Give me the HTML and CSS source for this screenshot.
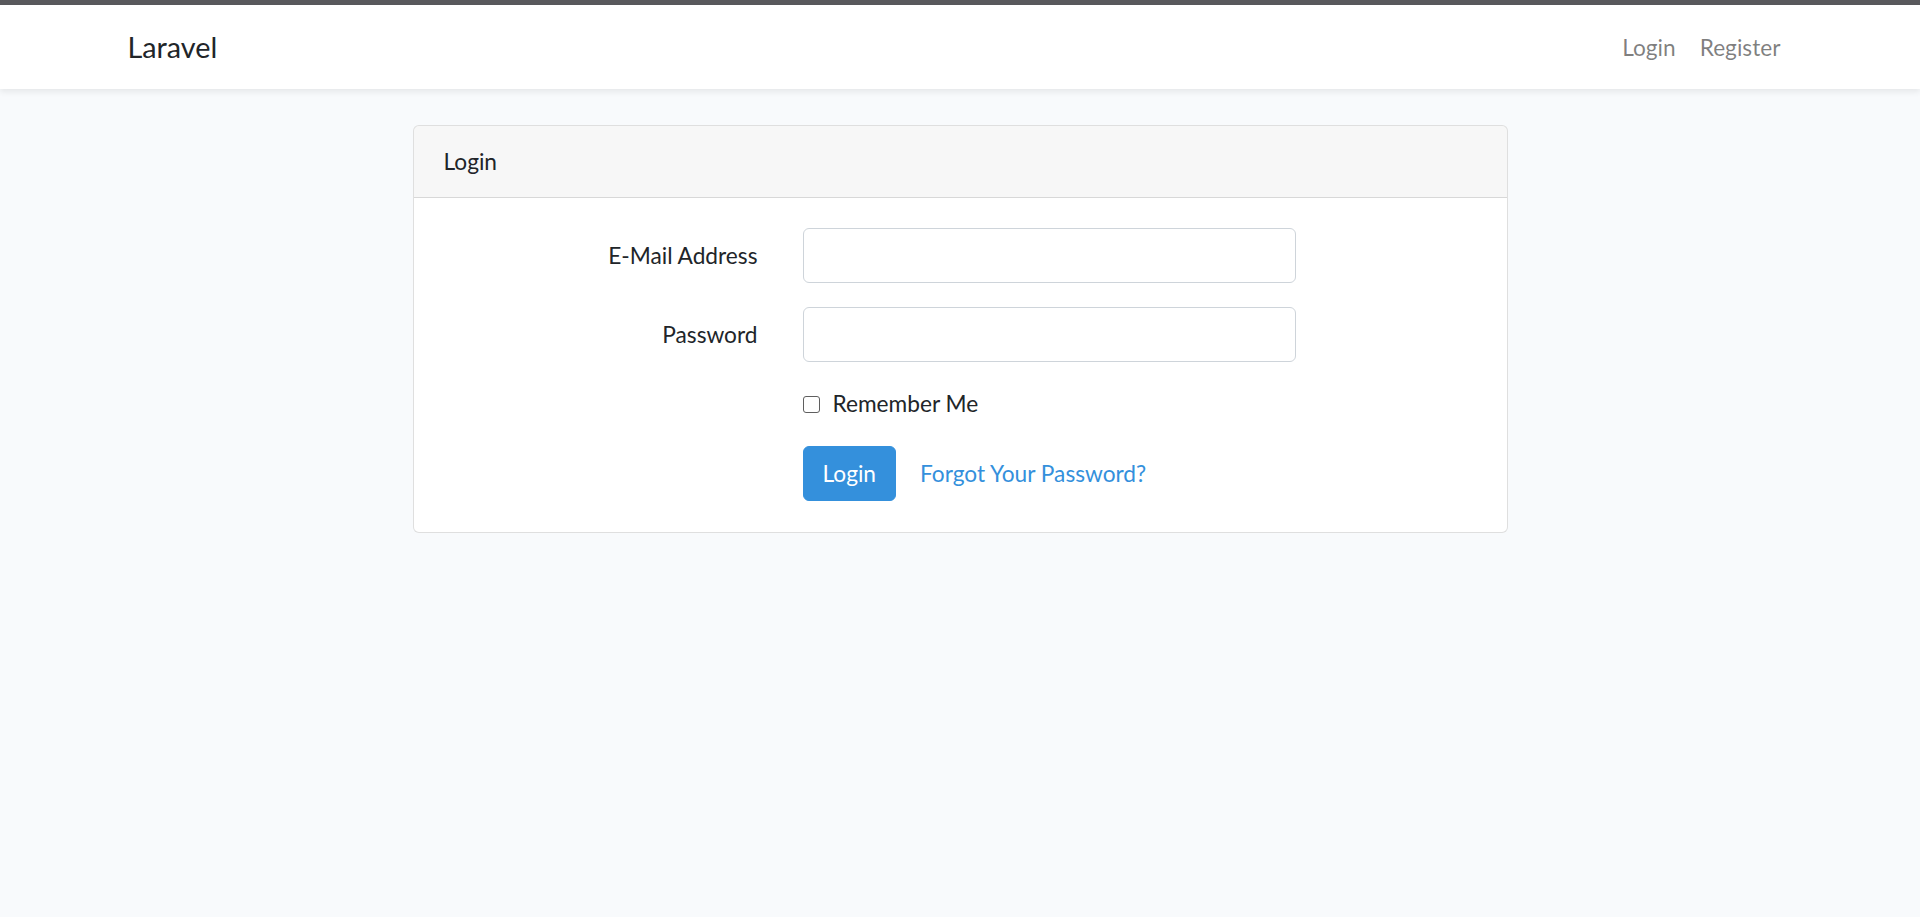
FILE: index.html
```html
<!DOCTYPE html>
<html lang="en">
<head>
<meta charset="utf-8">
<title>Laravel</title>
<link rel="stylesheet" href="styles.css">
</head>
<body>
<div class="topbar"></div>
<nav class="navbar">
  <div class="container nav-inner">
    <a class="brand" href="#">Laravel</a>
    <ul class="nav">
      <li><a class="nav-link" href="#">Login</a></li>
      <li><a class="nav-link" href="#">Register</a></li>
    </ul>
  </div>
</nav>
<main class="main">
  <div class="container">
    <div class="card">
      <div class="card-header">Login</div>
      <div class="card-body">
        <form class="form">
          <div class="form-row">
            <label class="form-label" for="email">E-Mail Address</label>
            <input class="form-control" id="email" type="email">
          </div>
          <div class="form-row">
            <label class="form-label" for="password">Password</label>
            <input class="form-control" id="password" type="password">
          </div>
          <div class="form-row">
            <div class="form-check">
              <input class="check-input" type="checkbox" id="remember">
              <label class="check-label" for="remember">Remember Me</label>
            </div>
          </div>
          <div class="form-row last">
            <div class="actions">
              <button class="btn-primary" type="button">Login</button>
              <a class="btn-link" href="#">Forgot Your Password?</a>
            </div>
          </div>
        </form>
      </div>
    </div>
  </div>
</main>
</body>
</html>
```

FILE: styles.css
```css
* { box-sizing: border-box; }
html, body { margin: 0; padding: 0; }
body {
  background: #f8fafc;
  color: #212529;
  font-family: "Lato", "Noto Sans", sans-serif;
  font-size: 22.7px;
  line-height: 35px;
  min-height: 917px;
}
.topbar { height: 5px; background: #59595d; }
.navbar {
  background: #fff;
  padding: 12px 0;
  box-shadow: 0 3px 6px rgba(0,0,0,.075);
  position: relative;
}
.container {
  max-width: 1710px;
  margin: 0 auto;
  padding: 0 22.5px;
}
.nav-inner {
  display: flex;
  align-items: center;
  justify-content: space-between;
}
.brand {
  font-size: 28.8px;
  line-height: 45px;
  padding: 7.5px 0;
  color: #212529;
  text-decoration: none;
}
.nav { list-style: none; margin: 0; padding: 0; display: flex; }
.nav-link {
  display: block;
  padding: 12px 12px;
  color: rgba(0,0,0,.5);
  text-decoration: none;
  line-height: 35px;
}
.main { padding: 36px 0; }
.card {
  width: 1095px;
  margin: 0 auto;
  background: #fff;
  border: 1px solid rgba(0,0,0,.125);
  border-radius: 6px;
}
.card-header {
  background: rgba(0,0,0,.03);
  padding: 18px 30px;
  border-bottom: 1px solid rgba(0,0,0,.125);
  border-radius: 5px 5px 0 0;
  line-height: 35px;
}
.card-body { padding: 30px 30px 31px; }
.form-row {
  display: grid;
  grid-template-columns: 314px 493.5px;
  column-gap: 45px;
  margin-bottom: 24px;
}
.form-row.last { margin-bottom: 0; }
.form-label {
  grid-column: 1;
  text-align: right;
  padding-top: 10px;
  line-height: 35px;
}
.form-control {
  grid-column: 2;
  height: 55px;
  padding: 9px 18px;
  font: inherit;
  border: 1.5px solid #ced4da;
  border-radius: 6px;
  background: #fff;
}
.form-check {
  grid-column: 2;
  display: flex;
  align-items: center;
  line-height: 36px;
}
.check-input {
  appearance: none;
  -webkit-appearance: none;
  width: 17px;
  height: 17px;
  margin: 0 13px 0 0;
  border: 1.5px solid #5f5f5f;
  border-radius: 3px;
  background: #fff;
}
.check-label { color: #212529; }
.actions {
  grid-column: 2;
  display: flex;
  align-items: center;
  gap: 5px;
}
.btn-primary {
  font: inherit;
  line-height: 35px;
  height: 55px;
  padding: 0 19px;
  background: #3490dc;
  border: 1.5px solid #3490dc;
  border-radius: 6px;
  color: #fff;
}
.btn-link {
  padding: 9px 18px;
  border: 1.5px solid transparent;
  color: #3490dc;
  text-decoration: none;
  line-height: 35px;
}
```
